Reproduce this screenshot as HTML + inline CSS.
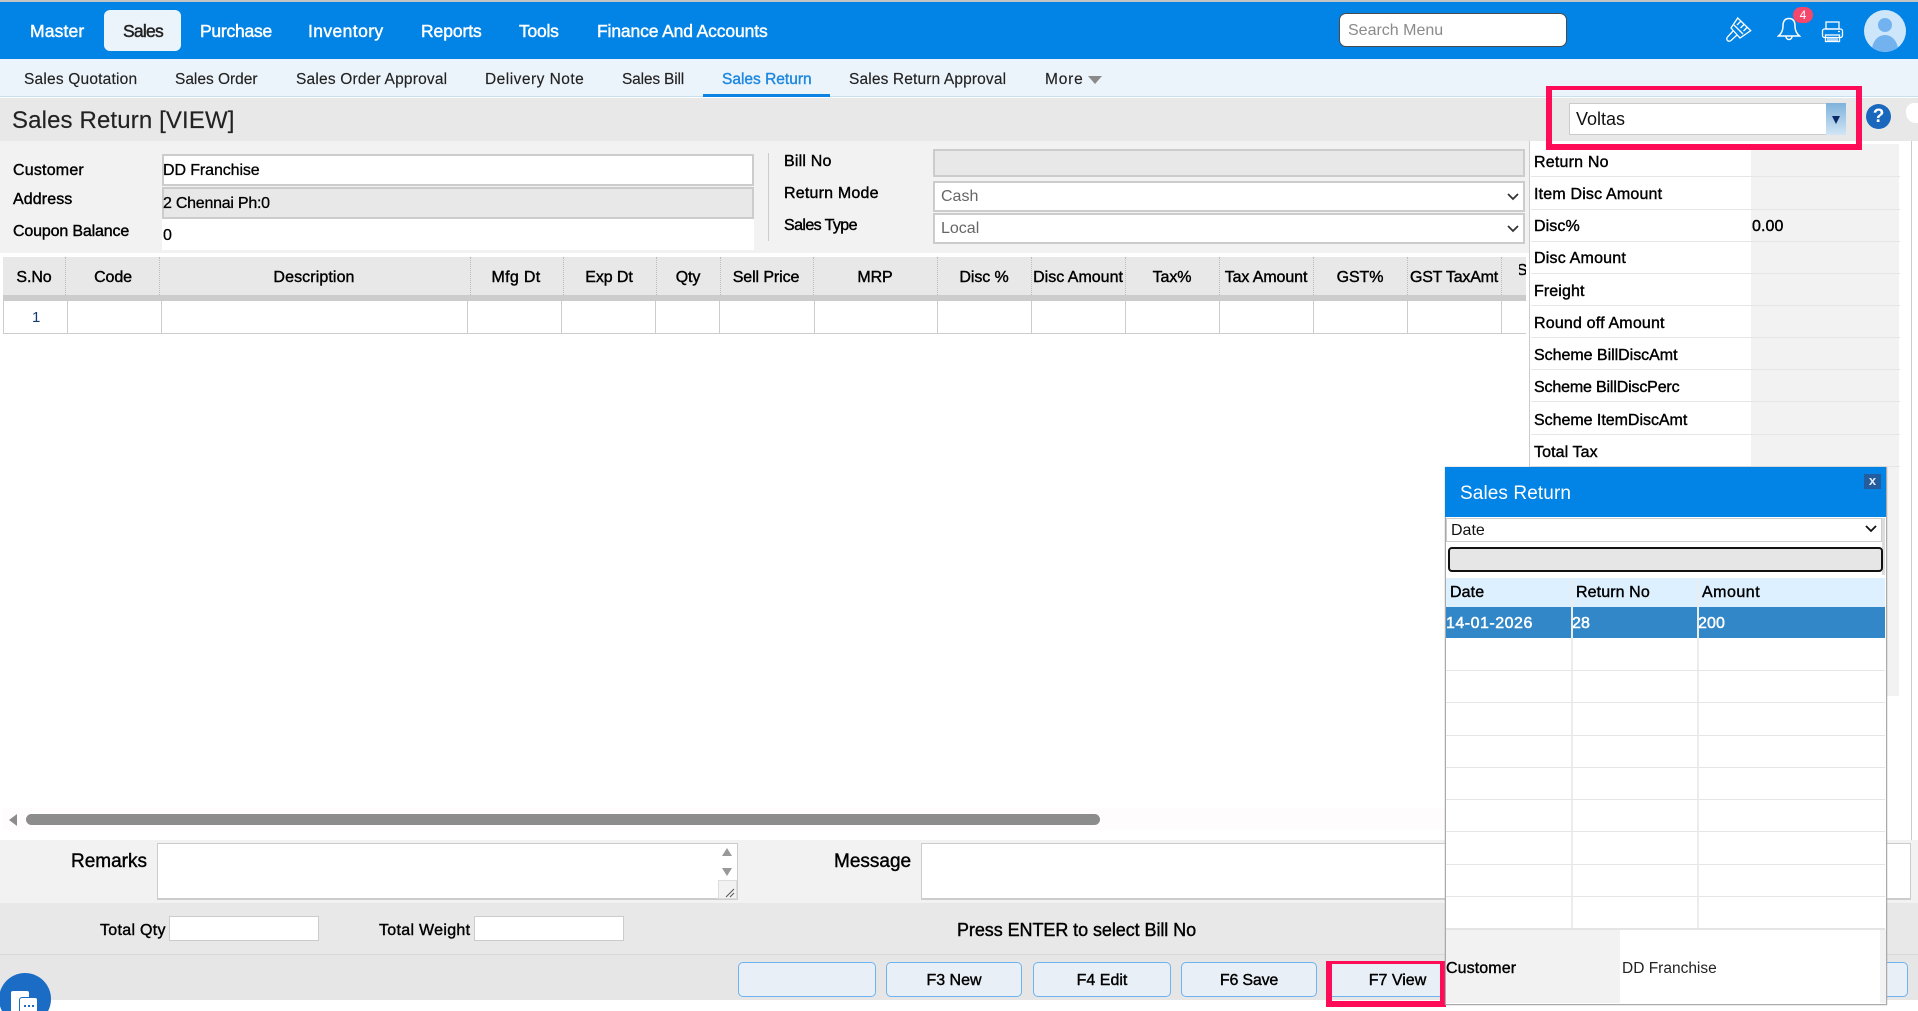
<!DOCTYPE html>
<html><head><meta charset="utf-8"><title>Sales Return</title>
<style>
html,body{margin:0;padding:0;width:1918px;height:1011px;overflow:hidden;background:#fff}
body{font-family:"Liberation Sans",Arial,sans-serif;color:#000;position:relative}
.a{position:absolute;box-sizing:border-box}
.t{position:absolute;white-space:nowrap;line-height:22px;height:22px;margin-top:-10px}
.n{font-size:17.5px;color:#fff;-webkit-text-stroke:.45px #fff;letter-spacing:-.25px;top:30px}
.s{font-size:15.5px;color:#222;top:79px;letter-spacing:.2px;-webkit-text-stroke:.15px #222}
.l{font-size:16px;-webkit-text-stroke:.4px #000;letter-spacing:.1px}
.h{font-size:16px;-webkit-text-stroke:.4px #000;top:277px;transform:translateX(-50%);letter-spacing:-.1px}
.v{position:absolute;width:1px}
.hv{top:257px;height:38px;border-left:1px dotted #bbb}
.bv{top:301px;height:32px;background:#ccc}
.pr{position:absolute;left:1531px;width:369px;height:1px;background:#e6e6e6}
.btn{position:absolute;top:962px;height:35px;background:#e9eff7;border:1px solid #6db3ef;border-radius:5px;text-align:center;line-height:36px;font-size:16px;-webkit-text-stroke:.4px #000;box-sizing:border-box}
.inp{position:absolute;box-sizing:border-box;border:2px solid #ccc;background:#fff}
.pl{position:absolute;left:1446px;width:439px;height:1px;background:#e6e6e6}
.pc{position:absolute;width:2px;background:#ececec}
</style></head>
<body>
<!-- top bar -->
<div class="a" style="left:0;top:0;width:1918px;height:2px;background:#c4c4c4"></div>
<div class="a" style="left:0;top:2px;width:1918px;height:57px;background:#0283e6"></div>
<div class="a" style="left:104px;top:10px;width:77px;height:41px;background:#ecf4fb;border-radius:6px"></div>
<span class="t n" style="left:30px;letter-spacing:.15px">Master</span>
<span class="t n" style="left:123px;color:#222;-webkit-text-stroke-color:#222;letter-spacing:-.75px">Sales</span>
<span class="t n" style="left:200px">Purchase</span>
<span class="t n" style="left:308px;letter-spacing:.4px">Inventory</span>
<span class="t n" style="left:421px;letter-spacing:-.08px">Reports</span>
<span class="t n" style="left:519px">Tools</span>
<span class="t n" style="left:597px;letter-spacing:-.13px">Finance And Accounts</span>
<div class="a" style="left:1339px;top:13px;width:228px;height:34px;background:#fff;border:1px solid #4a4a4a;border-radius:7px"></div>
<span class="t" style="left:1348px;top:30px;font-size:16px;color:#8a8a8a">Search Menu</span>
<svg class="a" style="left:1726px;top:17px" width="26" height="26" viewBox="0 0 26 26" fill="none" stroke="#fff" stroke-width="1.3"><path d="M11.700 1L24.700 13.700L14 21L5 11Z"/><path d="M7 14L1.500 20Q0 22 1.500 23.500Q3 25 5 23.500L11 18"/><path d="M15 4L11 8M18.500 7L14.500 11M21.500 10L17.500 14M8 8L17 17"/></svg>
<svg class="a" style="left:1777px;top:17px" width="24" height="25" viewBox="0 0 24 25" fill="none" stroke="#fff" stroke-width="1.5"><path d="M12 1.500C7.500 1.500 6 5 6 9C6 13.500 4.500 16.500 1.500 19H22.500C19.500 16.500 18 13.500 18 9C18 5 16.500 1.500 12 1.500Z"/><path d="M9 19.500a3 3 0 0 0 6 0"/></svg>
<div class="a" style="left:1793px;top:7px;width:20px;height:16px;border-radius:10px;background:#f4476b;color:#fff;font-size:12px;line-height:16px;text-align:center">4</div>
<svg class="a" style="left:1821px;top:21px" width="23" height="22" viewBox="0 0 23 22" fill="none" stroke="#fff" stroke-width="1.300"><rect x="5" y="1" width="13" height="7"/><rect x="1.500" y="8" width="20" height="8.500" rx="2"/><rect x="4.500" y="14" width="14" height="6.500"/><path d="M6 17h11M6 19h11M17 10.500h2"/></svg>
<div class="a" style="left:1864px;top:10px;width:42px;height:42px;border-radius:50%;background:#cde6fa;overflow:hidden"><div class="a" style="left:14px;top:8px;width:14px;height:14px;border-radius:50%;background:#72b3ef"></div><div class="a" style="left:8px;top:25px;width:26px;height:30px;border-radius:50%;background:#72b3ef"></div></div>
<!-- sub nav -->
<div class="a" style="left:0;top:59px;width:1918px;height:38px;background:#ecf4fb;border-bottom:1px solid #c8dff0"></div>
<span class="t s" style="left:24px">Sales Quotation</span>
<span class="t s" style="left:175px;letter-spacing:-.02px">Sales Order</span>
<span class="t s" style="left:296px">Sales Order Approval</span>
<span class="t s" style="left:485px;letter-spacing:.48px">Delivery Note</span>
<span class="t s" style="left:622px;letter-spacing:-.17px">Sales Bill</span>
<span class="t s" style="left:722px;color:#1e88e0;-webkit-text-stroke:.4px #1e88e0;letter-spacing:0">Sales Return</span>
<div class="a" style="left:703px;top:94px;width:127px;height:3px;background:#0d84e4"></div>
<span class="t s" style="left:849px;letter-spacing:.14px">Sales Return Approval</span>
<span class="t s" style="left:1045px;letter-spacing:.8px">More</span>
<div class="a" style="left:1088px;top:76px;width:0;height:0;border-left:7px solid transparent;border-right:7px solid transparent;border-top:8px solid #8a8a8a"></div>
<!-- title band -->
<div class="a" style="left:0;top:98px;width:1918px;height:43px;background:#e8e8e8"></div>
<span class="t" style="left:12px;top:120px;font-size:24px;color:#222;line-height:30px;height:30px;margin-top:-14px;letter-spacing:.13px;-webkit-text-stroke:.15px #222">Sales Return [VIEW]</span>
<!-- form -->
<div class="a" style="left:0;top:141px;width:1529px;height:112px;background:#f2f2f2"></div>
<span class="t l" style="left:13px;top:170px;letter-spacing:.2px">Customer</span>
<span class="t l" style="left:13px;top:199px">Address</span>
<span class="t l" style="left:13px;top:231px;letter-spacing:-.16px">Coupon Balance</span>
<div class="inp" style="left:162px;top:154px;width:592px;height:32px"></div>
<div class="inp" style="left:162px;top:187px;width:592px;height:32px;background:#e8e8e8"></div>
<div class="a" style="left:162px;top:219px;width:592px;height:31px;background:#fff"></div>
<span class="t l" style="left:163px;top:170px;-webkit-text-stroke:.3px #000;letter-spacing:-.1px">DD Franchise</span>
<span class="t l" style="left:163px;top:203px;-webkit-text-stroke:.3px #000;letter-spacing:-.25px">2 Chennai Ph:0</span>
<span class="t l" style="left:163px;top:235px;-webkit-text-stroke:.3px #000">0</span>
<div class="a" style="left:768px;top:153px;width:1px;height:88px;background:#ccc"></div>
<span class="t l" style="left:784px;top:161px;letter-spacing:.2px">Bill No</span>
<span class="t l" style="left:784px;top:193px;letter-spacing:.2px">Return Mode</span>
<span class="t l" style="left:784px;top:225px;letter-spacing:-.6px">Sales Type</span>
<div class="inp" style="left:933px;top:149px;width:592px;height:28px;background:#e8e8e8"></div>
<div class="inp" style="left:933px;top:181px;width:592px;height:31px"></div>
<div class="inp" style="left:933px;top:213px;width:592px;height:31px"></div>
<span class="t" style="left:941px;top:196px;font-size:16px;color:#666">Cash</span>
<span class="t" style="left:941px;top:228px;font-size:16px;color:#666">Local</span>
<svg class="a" style="left:1507px;top:193px" width="12" height="8" viewBox="0 0 12 8" fill="none" stroke="#333" stroke-width="1.800"><path d="M1 1l5 5 5-5"/></svg>
<svg class="a" style="left:1507px;top:225px" width="12" height="8" viewBox="0 0 12 8" fill="none" stroke="#333" stroke-width="1.800"><path d="M1 1l5 5 5-5"/></svg>
<!-- grid -->
<div class="a" style="left:3px;top:257px;width:1523px;height:38px;background:#e8e8e8"></div>
<div class="a" style="left:3px;top:295px;width:1523px;height:6px;background:#ccc"></div>
<div class="a" style="left:3px;top:333px;width:1523px;height:1px;background:#ccc"></div>
<div class="a" style="left:3px;top:301px;width:1px;height:32px;background:#ccc"></div>
<span class="t h" style="left:34px">S.No</span><span class="t h" style="left:113px">Code</span><span class="t h" style="left:314px;letter-spacing:.1px">Description</span><span class="t h" style="left:516px;letter-spacing:.3px">Mfg Dt</span><span class="t h" style="left:609px">Exp Dt</span><span class="t h" style="left:688px">Qty</span><span class="t h" style="left:766px">Sell Price</span><span class="t h" style="left:875px">MRP</span><span class="t h" style="left:984px">Disc %</span><span class="t h" style="left:1078px;letter-spacing:0">Disc Amount</span><span class="t h" style="left:1172px">Tax%</span><span class="t h" style="left:1266px">Tax Amount</span><span class="t h" style="left:1360px">GST%</span><span class="t h" style="left:1454px;letter-spacing:-.2px">GST TaxAmt</span>
<div class="a" style="left:1519px;top:262px;width:7px;height:22px;overflow:hidden"><span class="t h" style="left:3px;top:8px;">S</span></div>
<i class="v hv" style="left:65px"></i><i class="v hv" style="left:159px"></i><i class="v hv" style="left:470px"></i><i class="v hv" style="left:563px"></i><i class="v hv" style="left:656px"></i><i class="v hv" style="left:720px"></i><i class="v hv" style="left:813px"></i><i class="v hv" style="left:937px"></i><i class="v hv" style="left:1031px"></i><i class="v hv" style="left:1125px"></i><i class="v hv" style="left:1219px"></i><i class="v hv" style="left:1313px"></i><i class="v hv" style="left:1407px"></i><i class="v hv" style="left:1501px"></i>
<i class="v bv" style="left:67px"></i><i class="v bv" style="left:161px"></i><i class="v bv" style="left:467px"></i><i class="v bv" style="left:561px"></i><i class="v bv" style="left:655px"></i><i class="v bv" style="left:719px"></i><i class="v bv" style="left:814px"></i><i class="v bv" style="left:937px"></i><i class="v bv" style="left:1031px"></i><i class="v bv" style="left:1125px"></i><i class="v bv" style="left:1219px"></i><i class="v bv" style="left:1313px"></i><i class="v bv" style="left:1407px"></i><i class="v bv" style="left:1501px"></i>
<span class="t" style="left:32px;top:317px;font-size:15px;color:#123c6e">1</span>
<!-- right summary panel -->
<div class="a" style="left:1529px;top:141px;width:1px;height:763px;background:#ccc"></div>
<div class="a" style="left:1911px;top:141px;width:1px;height:763px;background:#ccc"></div>
<div class="a" style="left:1751px;top:144px;width:148px;height:552px;background:#f2f2f2"></div>
<span class="t l" style="left:1534px;top:162px;letter-spacing:.2px">Return No</span>
<span class="t l" style="left:1534px;top:194px;letter-spacing:.18px">Item Disc Amount</span>
<span class="t l" style="left:1534px;top:226px">Disc%</span>
<span class="t l" style="left:1752px;top:226px">0.00</span>
<span class="t l" style="left:1534px;top:258px;letter-spacing:.2px">Disc Amount</span>
<span class="t l" style="left:1534px;top:291px">Freight</span>
<span class="t l" style="left:1534px;top:323px;letter-spacing:.18px">Round off Amount</span>
<span class="t l" style="left:1534px;top:355px;letter-spacing:-.03px">Scheme BillDiscAmt</span>
<span class="t l" style="left:1534px;top:387px;letter-spacing:-.16px">Scheme BillDiscPerc</span>
<span class="t l" style="left:1534px;top:420px;letter-spacing:-.03px">Scheme ItemDiscAmt</span>
<span class="t l" style="left:1534px;top:452px">Total Tax</span>
<i class="pr" style="top:176px"></i><i class="pr" style="top:209px"></i><i class="pr" style="top:241px"></i><i class="pr" style="top:273px"></i><i class="pr" style="top:305px"></i><i class="pr" style="top:337px"></i><i class="pr" style="top:369px"></i><i class="pr" style="top:401px"></i><i class="pr" style="top:434px"></i><i class="pr" style="top:466px"></i>
<!-- voltas -->
<div class="a" style="left:1569px;top:103px;width:277px;height:32px;background:#fff;border:1px solid #ccc"></div>
<div class="a" style="left:1826px;top:103px;width:20px;height:32px;background:linear-gradient(#7fb2dc,#d2e5f4)"></div>
<div class="a" style="left:1832px;top:116px;width:0;height:0;border-left:4px solid transparent;border-right:4px solid transparent;border-top:8px solid #0b2a66"></div>
<span class="t" style="left:1576px;top:118px;font-size:18px;color:#111">Voltas</span>
<div class="a" style="left:1546px;top:86px;width:316px;height:64px;border:6px solid #fe0c58;border-top-width:4px"></div>
<div class="a" style="left:1866px;top:104px;width:25px;height:25px;border-radius:50%;background:#1a68bd;color:#fff;font-size:19px;font-weight:bold;line-height:25px;text-align:center">?</div>
<div class="a" style="left:1906px;top:103px;width:12px;height:20px;background:#fff;border-radius:8px 0 0 10px"></div>
<!-- scrollbar -->
<div class="a" style="left:3px;top:808px;width:1442px;height:22px;background:#fefcfd"></div>
<div class="a" style="left:9px;top:814px;width:0;height:0;border-top:6px solid transparent;border-bottom:6px solid transparent;border-right:8px solid #8c8c8c"></div>
<div class="a" style="left:26px;top:814px;width:1074px;height:11px;background:#8c8c8c;border-radius:6px"></div>
<!-- remarks -->
<div class="a" style="left:0;top:840px;width:1918px;height:63px;background:#f2f2f2"></div>
<span class="t" style="left:71px;top:861px;font-size:19px;-webkit-text-stroke:.4px #000">Remarks</span>
<div class="inp" style="left:157px;top:843px;width:581px;height:57px;border-width:1px 1px 2px 1px"></div>
<div class="a" style="left:722px;top:848px;width:0;height:0;border-left:5px solid transparent;border-right:5px solid transparent;border-bottom:8px solid #999"></div>
<div class="a" style="left:722px;top:868px;width:0;height:0;border-left:5px solid transparent;border-right:5px solid transparent;border-top:8px solid #999"></div>
<div class="a" style="left:718px;top:880px;width:19px;height:19px;background:#f2f2f2;border:1px solid #ddd"></div>
<svg class="a" style="left:725px;top:888px" width="10" height="10" viewBox="0 0 10 10" stroke="#555" stroke-width="1"><path d="M1 9L9 1M5 9L9 5"/></svg>
<span class="t" style="left:834px;top:861px;font-size:19px;-webkit-text-stroke:.4px #000">Message</span>
<div class="inp" style="left:921px;top:843px;width:990px;height:57px;border-width:1px 1px 2px 1px"></div>
<!-- totals -->
<div class="a" style="left:0;top:903px;width:1918px;height:52px;background:#e8e8e8;border-bottom:1px solid #d8d8d8"></div>
<span class="t l" style="left:100px;top:930px;letter-spacing:.3px">Total Qty</span>
<div class="a" style="left:169px;top:916px;width:150px;height:25px;background:#fff;border:1px solid #ccc"></div>
<span class="t l" style="left:379px;top:930px;letter-spacing:.3px">Total Weight</span>
<div class="a" style="left:474px;top:916px;width:150px;height:25px;background:#fff;border:1px solid #ccc"></div>
<span class="t" style="left:957px;top:929px;font-size:18px;-webkit-text-stroke:.4px #000;letter-spacing:-.07px">Press ENTER to select Bill No</span>
<!-- buttons -->
<div class="a" style="left:0;top:955px;width:1918px;height:45px;background:#e6e6e6"></div>
<div class="btn" style="left:738px;width:138px"></div>
<div class="btn" style="left:886px;width:136px">F3 New</div>
<div class="btn" style="left:1033px;width:138px">F4 Edit</div>
<div class="btn" style="left:1181px;width:136px;letter-spacing:-.2px">F6 Save</div>
<div class="btn" style="left:1326px;width:119px;padding-left:24px">F7 View</div>
<div class="btn" style="left:1860px;width:48px"></div>
<div class="a" style="left:1326px;top:961px;width:120px;height:46px;border:6px solid #fe0c58;border-top-width:3px"></div>
<!-- chat -->
<div class="a" style="left:-1px;top:973px;width:52px;height:52px;border-radius:50%;background:#1a6cc4;overflow:hidden">
<div class="a" style="left:12px;top:18px;width:18px;height:28px;background:#fff;border-radius:2px"></div>
<div class="a" style="left:20px;top:24px;width:19px;height:22px;background:#fff;border:1px solid #1a6cc4;border-radius:3px"></div>
<div class="a" style="left:25px;top:32px;width:10px;height:2px;background:repeating-linear-gradient(90deg,#1a6cc4 0 2px,transparent 2px 4px)"></div>
</div>
<!-- popup -->
<div class="a" style="left:1445px;top:467px;width:442px;height:538px;background:#fff;border:1px solid #aaa;border-top:0;box-shadow:0 0 1px #999">
</div>
<div class="a" style="left:1445px;top:467px;width:441px;height:50px;background:#0283e6"></div>
<span class="t" style="left:1460px;top:493px;font-size:19px;color:#fff;letter-spacing:.1px">Sales Return</span>
<div class="a" style="left:1864px;top:474px;width:17px;height:15px;background:#245d9e;color:#e4eef8;font-size:13px;font-weight:bold;line-height:13px;text-align:center">x</div>
<div class="a" style="left:1446px;top:518px;width:436px;height:24px;background:#fff;border:1px solid #ccc"></div>
<span class="t" style="left:1451px;top:530px;font-size:16px;color:#111">Date</span>
<svg class="a" style="left:1865px;top:525px" width="12" height="8" viewBox="0 0 12 8" fill="none" stroke="#111" stroke-width="1.800"><path d="M1 1l5 5 5-5"/></svg>
<div class="a" style="left:1882px;top:518px;width:3px;height:57px;background:#ddd"></div>
<div class="a" style="left:1448px;top:547px;width:435px;height:25px;background:#e6e6e6;border:2px solid #111;border-radius:4px"></div>
<div class="a" style="left:1446px;top:578px;width:439px;height:29px;background:#dcf0ff"></div>
<span class="t l" style="left:1450px;top:592px">Date</span>
<span class="t l" style="left:1576px;top:592px">Return No</span>
<span class="t l" style="left:1702px;top:592px;letter-spacing:.5px">Amount</span>
<div class="a" style="left:1446px;top:607px;width:439px;height:31px;background:#3187c7"></div>
<span class="t l" style="left:1446px;top:623px;color:#fff;-webkit-text-stroke:.5px #fff;letter-spacing:.5px">14-01-2026</span>
<span class="t l" style="left:1572px;top:623px;color:#fff;-webkit-text-stroke:.5px #fff">28</span>
<span class="t l" style="left:1698px;top:623px;color:#fff;-webkit-text-stroke:.5px #fff">200</span>
<i class="pc" style="left:1571px;top:578px;height:350px;"></i><i class="pc" style="left:1697px;top:578px;height:350px"></i>
<i class="pl" style="top:670px"></i><i class="pl" style="top:702px"></i><i class="pl" style="top:735px"></i><i class="pl" style="top:767px"></i><i class="pl" style="top:799px"></i><i class="pl" style="top:831px"></i><i class="pl" style="top:864px"></i><i class="pl" style="top:896px"></i>
<div class="a" style="left:1446px;top:928px;width:439px;height:2px;background:#e4e4e4"></div>
<div class="a" style="left:1446px;top:930px;width:174px;height:73px;background:#f2f2f2"></div>
<div class="a" style="left:1620px;top:930px;width:260px;height:73px;background:#fff;border-radius:0 0 8px 8px"></div>
<div class="a" style="left:1880px;top:930px;width:6px;height:73px;background:#f2f2f2"></div>
<span class="t l" style="left:1446px;top:968px">Customer</span>
<span class="t" style="left:1622px;top:968px;font-size:15.500px;color:#222">DD Franchise</span>
</body></html>
